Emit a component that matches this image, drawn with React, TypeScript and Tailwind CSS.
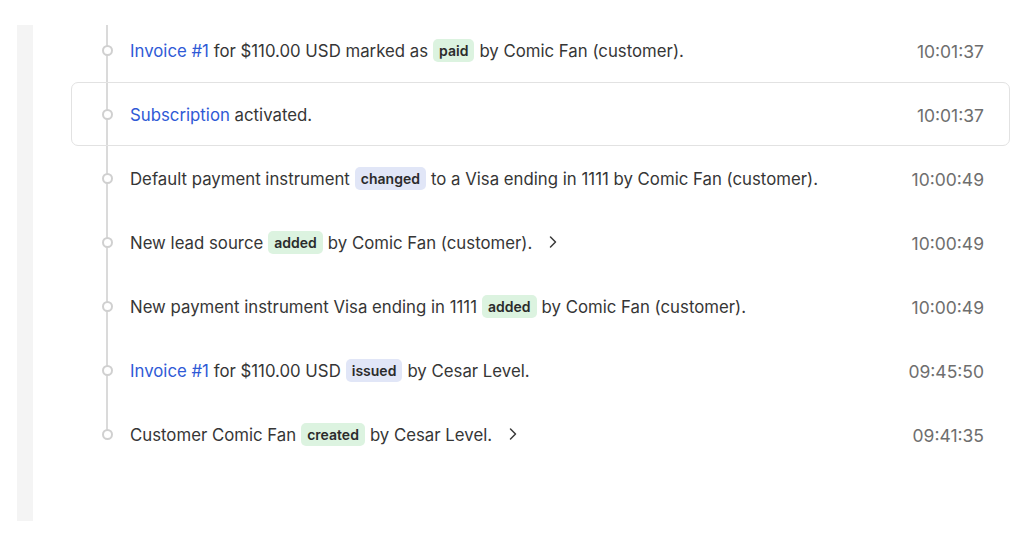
import { ChevronRight } from "lucide-react";
import type { ReactNode } from "react";

type Tone = "green" | "blue";

function Badge({ tone, children }: { tone: Tone; children: ReactNode }) {
  return (
    <span
      className={
        "mx-[5px] mb-[4px] inline-flex h-[23px] items-center rounded-[5px] px-[6px] text-[14px] font-semibold text-[#2b2b2b] " +
        (tone === "green" ? "bg-[#dcf3e0]" : "bg-[#e1e6f7]")
      }
    >
      {children}
    </span>
  );
}

function Link({ children }: { children: ReactNode }) {
  return <span className="text-[#2f5ad6]">{children}</span>;
}

const events: { body: ReactNode; time: string; more?: boolean; active?: boolean }[] = [
  {
    body: (
      <>
        <Link>Invoice #1</Link>&nbsp;for $110.00 USD marked as<Badge tone="green">paid</Badge>by Comic Fan (customer).
      </>
    ),
    time: "10:01:37",
  },
  {
    body: (
      <>
        <Link>Subscription</Link>&nbsp;activated.
      </>
    ),
    time: "10:01:37",
    active: true,
  },
  {
    body: (
      <>
        Default payment instrument<Badge tone="blue">changed</Badge>to a Visa ending in 1111 by Comic Fan (customer).
      </>
    ),
    time: "10:00:49",
  },
  {
    body: (
      <>
        New lead source<Badge tone="green">added</Badge>by Comic Fan (customer).
      </>
    ),
    time: "10:00:49",
    more: true,
  },
  {
    body: (
      <>
        New payment instrument Visa ending in 1111<Badge tone="green">added</Badge>by Comic Fan (customer).
      </>
    ),
    time: "10:00:49",
  },
  {
    body: (
      <>
        <Link>Invoice #1</Link>&nbsp;for $110.00 USD<Badge tone="blue">issued</Badge>by Cesar Level.
      </>
    ),
    time: "09:45:50",
  },
  {
    body: (
      <>
        Customer Comic Fan<Badge tone="green">created</Badge>by Cesar Level.
      </>
    ),
    time: "09:41:35",
    more: true,
  },
];

export default function App() {
  return (
    <div
      className="flex h-[533px] w-[1024px] bg-white text-[16.8px] text-[#363636]"
      style={{ fontFamily: "Inter, 'Noto Sans', sans-serif" }}
    >
      {/* side rail */}
      <div className="ml-[17px] mt-[25px] h-[496px] w-[16px] bg-[#f4f4f4]" />

      {/* timeline */}
      <div className="relative ml-[38px] mt-[18px] w-[939px]">
        <div className="absolute left-[35px] top-[7px] h-[409px] w-[2px] bg-[#dadada]" />
        {events.map((e, i) => (
          <div
            key={i}
            className={
              "relative flex h-16 items-center pr-[25px] " +
              (e.active ? "rounded-[7px] border border-[#e2e2e2]" : "border border-transparent")
            }
          >
            <div className="flex w-[58px] justify-center pl-[13px]">
              <span className="h-[11px] w-[11px] rounded-full border-2 border-[#d0d0d0] bg-white" />
            </div>
            <div className="flex flex-1 items-center whitespace-nowrap pt-[4px]">
              {e.body}
              {e.more && <ChevronRight className="mb-[4px] ml-[11px] text-[#3a3a3a]" size={20} strokeWidth={1.8} />}
            </div>
            <span className="pt-[4px] text-[17.5px] text-[#6e6e6e]">{e.time}</span>
          </div>
        ))}
      </div>
    </div>
  );
}
